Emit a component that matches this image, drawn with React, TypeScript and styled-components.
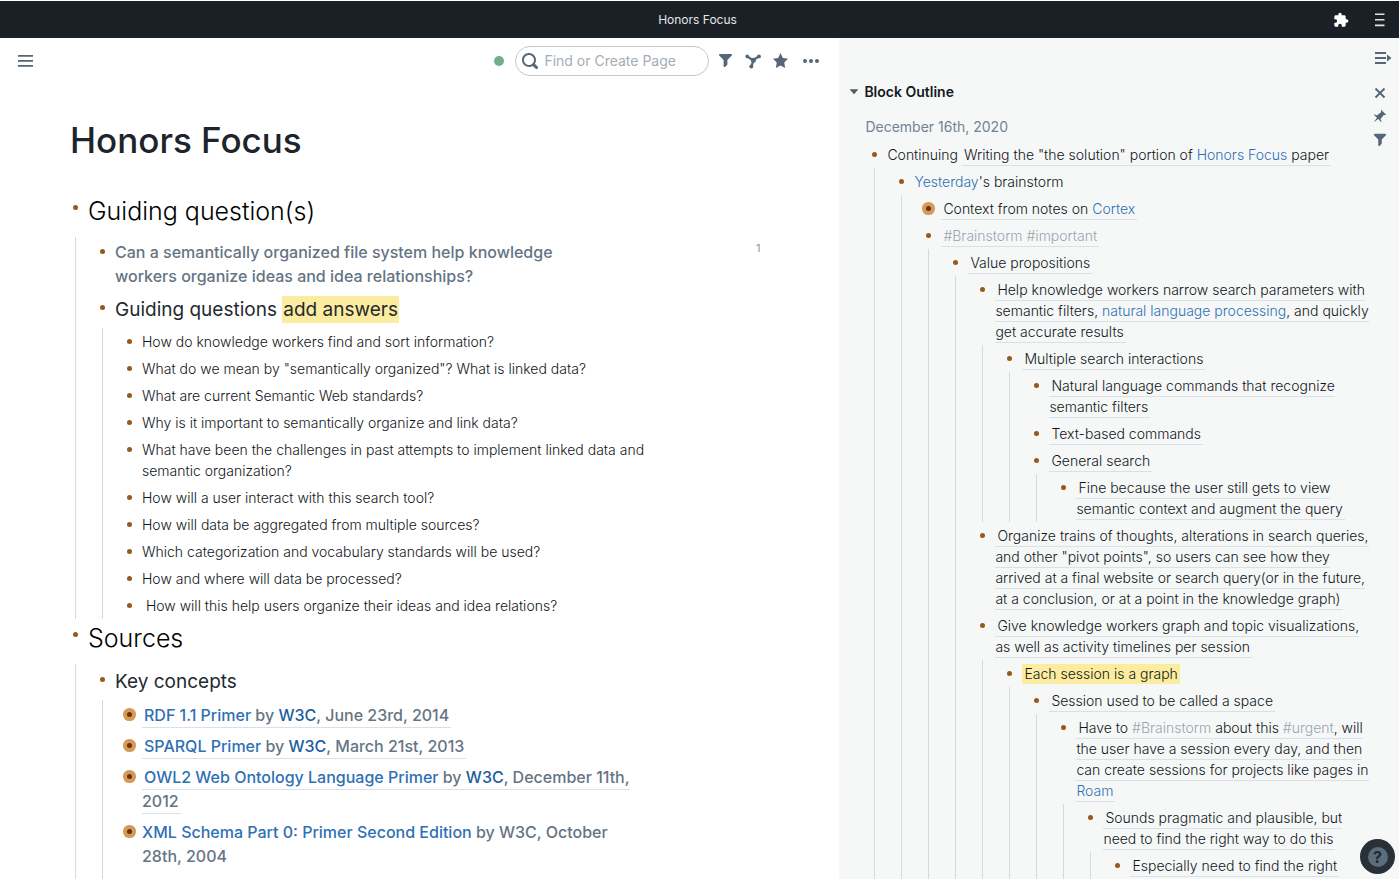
import React from "react";
import styled, { createGlobalStyle, css } from "styled-components";

const GlobalStyle = createGlobalStyle`
  * { box-sizing: border-box; }
  body { margin: 0; background: #fff; }
  button { font: inherit; color: inherit; background: none; border: 0; padding: 0; cursor: pointer; }
  a { color: inherit; text-decoration: none; }
`;

const App = styled.div`
  height: 100vh;
  padding: 1px 1px 2px 0;
  display: flex;
  flex-direction: column;
  overflow: hidden;
  font-family: Inter, "Liberation Sans", sans-serif;
  font-size: 14px;
  line-height: 21px;
  color: #12161a;
`;

const TitleBar = styled.header`
  flex: none;
  height: 37px;
  display: grid;
  grid-template-columns: 1fr auto 1fr;
  align-items: center;
  padding: 0 14px 0 10px;
  background: #1b2027;
  color: #e4e6e8;
  font-size: 12px;
`;

const WindowTitle = styled.span`
  grid-column: 2;
`;

const WindowActions = styled.div`
  display: flex;
  justify-content: flex-end;
  align-items: center;
  gap: 26px;
`;

const IconButton = styled.button`
  display: flex;
  align-items: center;
  justify-content: center;
`;

const Columns = styled.div`
  flex: 1;
  min-height: 0;
  display: grid;
  grid-template-columns: 3fr 2fr;
`;

const Main = styled.main`
  min-width: 0;
  overflow: hidden;
`;

const Toolbar = styled.div`
  display: flex;
  align-items: center;
  height: 45px;
  padding: 0 20px 0 18px;
  color: #566676;
`;

const ToolbarEnd = styled.div`
  margin-left: auto;
  display: flex;
  align-items: center;
`;

const ToolIcons = styled.div`
  display: flex;
  align-items: center;
  gap: 12px;
  margin: 0 15px 0 9px;
`;

const SyncDot = styled.span`
  width: 10px;
  height: 10px;
  border-radius: 50%;
  background: #74ad8b;
  margin-right: 11px;
`;

const SearchBox = styled.label`
  display: flex;
  align-items: center;
  gap: 6px;
  width: 194px;
  height: 30px;
  padding: 0 6px;
  border: 1px solid #c4c7ca;
  border-radius: 15px;
`;

const SearchInput = styled.input`
  flex: 1;
  min-width: 0;
  border: 0;
  padding: 0;
  outline: 0;
  background: none;
  font: inherit;
  color: #2a3037;
  &::placeholder { color: #a3adb6; opacity: 1; }
`;

const Page = styled.article`
  padding: 31px 79px 0 73px;
`;

const PageTitle = styled.h1`
  margin: 0 0 26px -3px;
  font-size: 35px;
  line-height: 52px;
  font-weight: 500;
  color: #1c242c;
`;

type Level = "h1" | "h2" | "h3" | "body";

const levels = {
  h1: css`
    font-size: 25px;
    line-height: 38px;
    padding-bottom: 7px;
    font-weight: 300;
    color: #000;
  `,
  h2: css`
    font-size: 19px;
    line-height: 35px;
    padding-bottom: 1px;
    font-weight: 400;
    color: #24292f;
  `,
  h3: css`
    font-size: 16px;
    line-height: 24px;
    padding: 3px 0 4px;
    font-weight: 500;
    color: #657483;
  `,
  body: css`
    padding: 3px 0;
    font-weight: 300;
  `,
};

const bulletTop = { h1: 13, h2: 13, h3: 9, body: 8 };

const List = styled.ul`
  list-style: none;
  margin: 0;
  padding: 0;
`;

const Children = styled(List)`
  margin-left: 2px;
  padding-left: 24px;
  border-left: 1px solid #d3dae2;
`;

const Row = styled.div<{ $level: Level }>`
  display: flex;
  align-items: flex-start;
  gap: 10px;
  ${(p) => levels[p.$level]}
`;

const Bullet = styled.span<{ $level: Level; $closed?: boolean }>`
  flex: none;
  width: 5px;
  height: 5px;
  margin-top: ${(p) => bulletTop[p.$level]}px;
  border-radius: 50%;
  background: ${(p) => (p.$closed ? "#6d2f0a" : "#97591c")};
  box-shadow: ${(p) => (p.$closed ? "0 0 0 4px #d59a57" : "none")};
`;

const Text = styled.div<{ $narrow?: boolean }>`
  min-width: 0;
  max-width: ${(p) => (p.$narrow ? "480px" : "none")};
`;

const MainList = styled(List)`
  ${Text} { margin-right: 112px; }
  > li:last-child ${Children} { padding-bottom: 20px; }
`;

const Count = styled.span`
  margin-left: auto;
  font-size: 11px;
  line-height: 16px;
  font-weight: 400;
  color: #8b959e;
`;

const Ref = styled.span`
  padding: 0 2px 2px;
  border-bottom: 1px solid #d9e0e6;
`;

const Link = styled.a`
  color: #2f70b5;
`;

const StrongLink = styled.a`
  color: #205d9e;
`;

const Tag = styled.a`
  color: #9aa4ae;
`;

const Highlight = styled.mark<{ $tall?: boolean }>`
  color: inherit;
  background: #fcec9f;
  padding: ${(p) => (p.$tall ? "2px 1px" : "1px 2px 2px")};
`;

const Sidebar = styled.aside`
  min-width: 0;
  overflow: hidden;
  display: flex;
  flex-direction: column;
  background: #f6f8f8;
`;

const SidebarTop = styled.div`
  flex: none;
  height: 40px;
  display: flex;
  align-items: center;
  justify-content: flex-end;
  padding-right: 7px;
  color: #566676;
`;

const SidebarBody = styled.div`
  display: flex;
  gap: 2px;
  padding-right: 12px;
`;

const Outline = styled.section`
  flex: 1;
  min-width: 0;
`;

const OutlineHeader = styled.h2`
  display: flex;
  align-items: center;
  gap: 5px;
  height: 26px;
  margin: 0 0 9px;
  padding-left: 10px;
  font-size: 14px;
  font-weight: 600;
  color: #15191d;

  svg { color: #565b60; }
`;

const Breadcrumb = styled.a`
  display: block;
  padding-left: 26px;
  line-height: 28px;
  color: #748291;
`;

const OutlineList = styled(List)`
  padding-left: 33px;
`;

const PanelTools = styled.div`
  flex: none;
  width: 14px;
  display: flex;
  flex-direction: column;
  align-items: center;
  gap: 10px;
  padding-top: 9px;
  color: #566676;
`;

const HelpButton = styled.button`
  position: fixed;
  right: 5px;
  bottom: 7px;
  width: 35px;
  height: 35px;
  border-radius: 50%;
  background: #2a3038;
  display: flex;
  align-items: center;
  justify-content: center;
`;

const HelpMark = styled.span`
  width: 20px;
  height: 20px;
  border-radius: 50%;
  background: #5c6d7d;
  color: #22282f;
  font-size: 16px;
  line-height: 20px;
  font-weight: 700;
`;

const paths = {
  filter:
    "M13.99.99h-12a1.003 1.003 0 00-.71 1.71l4.71 4.71V14a1.003 1.003 0 001.71.71l2-2c.18-.18.29-.43.29-.71V7.41L14.7 2.7a1.003 1.003 0 00-.71-1.71z",
  star: "M16 6.11l-5.53-.84L8 0 5.53 5.27 0 6.11l4 4.1L3.06 16 8 13.27 12.94 16 12 10.21l4-4.1z",
  search:
    "M15.55 13.43l-2.67-2.68a6.94 6.94 0 001.11-3.76c0-3.87-3.13-7-7-7s-7 3.13-7 7 3.13 7 7 7c1.39 0 2.68-.42 3.76-1.11l2.68 2.67a1.498 1.498 0 102.12-2.12zm-8.56-1.44c-2.76 0-5-2.24-5-5s2.24-5 5-5 5 2.24 5 5-2.24 5-5 5z",
  pin: "M9.41.92c-.51.51-.41 1.5.15 2.56L4.34 7.54C2.8 6.48 1.45 6.05.92 6.58l3.54 3.54-3.54 4.95 4.95-3.54 3.54 3.54c.53-.53.1-1.88-.96-3.42l4.06-5.22c1.06.56 2.04.66 2.55.15L9.41.92z",
  more: "M2 6a2 2 0 100 4 2 2 0 000-4zM8 6a2 2 0 100 4 2 2 0 000-4zM14 6a2 2 0 100 4 2 2 0 000-4z",
  menu: "M0 2h15v1.7H0zM0 7h15v1.7H0zM0 12h15v1.7H0z",
  caret: "M1 5h14L8 13z",
};

const Icon = ({ name, size = 16 }: { name: keyof typeof paths; size?: number }) => (
  <svg width={size} height={size} viewBox="0 0 16 16" fill="currentColor" aria-hidden="true">
    <path d={paths[name]} />
  </svg>
);

const PuzzleIcon = () => (
  <svg width="16" height="16" viewBox="0 0 24 24" fill="#fff" aria-hidden="true">
    <path d="M20.5 11H19V7c0-1.1-.9-2-2-2h-4V3.5C13 2.12 11.88 1 10.5 1S8 2.12 8 3.5V5H4c-1.1 0-1.99.9-1.99 2v3.8H3.5c1.49 0 2.7 1.21 2.7 2.7s-1.21 2.7-2.7 2.7H2V20c0 1.1.9 2 2 2h3.8v-1.5c0-1.49 1.21-2.7 2.7-2.7 1.49 0 2.7 1.21 2.7 2.7V22H17c1.1 0 2-.9 2-2v-4h1.5c1.38 0 2.5-1.12 2.5-2.5S21.88 11 20.5 11z" />
  </svg>
);

const BarsIcon = () => (
  <svg width="10" height="14" viewBox="0 0 10 14" stroke="#dfe1e3" strokeWidth="1.6" aria-hidden="true">
    <path d="M0 1.2h9.5M0 6.8h9.5M0 12.4h9.5" />
  </svg>
);

const GraphIcon = () => (
  <svg width="16" height="16" viewBox="0 0 16 16" fill="currentColor" stroke="currentColor" aria-hidden="true">
    <path d="M2.2 3.6L8 7.2l5.8-3.6M8.5 7.2L6.5 13.4" fill="none" strokeWidth="2.3" />
    <circle cx="2.2" cy="3.4" r="1.8" stroke="none" />
    <circle cx="14" cy="3.4" r="1.9" stroke="none" />
    <circle cx="8.4" cy="7.2" r="2.5" stroke="none" />
    <circle cx="6.3" cy="13.6" r="2" stroke="none" />
  </svg>
);

const CollapseIcon = () => (
  <svg width="17" height="14" viewBox="0 0 17 14" aria-hidden="true">
    <path d="M0 2h11M0 7h11M0 12h11" stroke="currentColor" strokeWidth="1.8" />
    <path d="M12 3.4L16.5 7 12 10.600z" fill="currentColor" />
  </svg>
);

const CrossIcon = () => (
  <svg width="12" height="12" viewBox="0 0 12 12" aria-hidden="true">
    <path d="M1.5 1.5l9 9M10.5 1.5l-9 9" stroke="currentColor" strokeWidth="1.9" />
  </svg>
);

interface BlockProps {
  text: React.ReactNode;
  level?: Level;
  closed?: boolean;
  count?: number;
  children?: React.ReactNode;
}

const Block = ({ text, level = "body", closed, count, children }: BlockProps) => (
  <li>
    <Row $level={level}>
      <Bullet $level={level} $closed={closed} />
      <Text $narrow={count !== undefined}>{text}</Text>
      {count !== undefined && <Count>{count}</Count>}
    </Row>
    {children && <Children>{children}</Children>}
  </li>
);

const questions = [
  "How do knowledge workers find and sort information?",
  'What do we mean by "semantically organized"? What is linked data?',
  "What are current Semantic Web standards?",
  "Why is it important to semantically organize and link data?",
  "What have been the challenges in past attempts to implement linked data and semantic organization?",
  "How will a user interact with this search tool?",
  "How will data be aggregated from multiple sources?",
  "Which categorization and vocabulary standards will be used?",
  "How and where will data be processed?",
  "\u00a0How will this help users organize their ideas and idea relations?",
];

const sources = [
  { title: "RDF 1.1 Primer", date: "June 23rd, 2014" },
  { title: "SPARQL Primer", date: "March 21st, 2013" },
  { title: "OWL2 Web Ontology Language Primer", date: "December 11th, 2012" },
];

export default function HonorsFocus() {
  return (
    <App>
      <GlobalStyle />
      <TitleBar>
        <WindowTitle>Honors Focus</WindowTitle>
        <WindowActions>
          <IconButton aria-label="Extensions"><PuzzleIcon /></IconButton>
          <IconButton aria-label="Window menu"><BarsIcon /></IconButton>
        </WindowActions>
      </TitleBar>
      <Columns>
        <Main>
          <Toolbar>
            <IconButton aria-label="Open menu"><Icon name="menu" /></IconButton>
            <ToolbarEnd>
              <SyncDot />
              <SearchBox>
                <Icon name="search" />
                <SearchInput aria-label="Find or Create Page" placeholder="Find or Create Page" />
              </SearchBox>
              <ToolIcons>
                <IconButton aria-label="Filter"><Icon name="filter" size={15} /></IconButton>
                <IconButton aria-label="Graph view"><GraphIcon /></IconButton>
                <IconButton aria-label="Star page"><Icon name="star" size={15} /></IconButton>
              </ToolIcons>
              <IconButton aria-label="More options"><Icon name="more" /></IconButton>
            </ToolbarEnd>
          </Toolbar>
          <Page>
            <PageTitle>Honors Focus</PageTitle>
            <MainList>
              <Block level="h1" text="Guiding question(s)">
                <Block
                  level="h3"
                  count={1}
                  text="Can a semantically organized file system help knowledge workers organize ideas and idea relationships?"
                />
                <Block level="h2" text={<>Guiding questions <Highlight $tall>add answers</Highlight></>}>
                  {questions.map((q) => <Block key={q} text={q} />)}
                </Block>
              </Block>
              <Block level="h1" text="Sources">
                <Block level="h2" text="Key concepts">
                  {sources.map((s) => (
                    <Block
                      key={s.title}
                      level="h3"
                      closed
                      text={<Ref><Link href="#">{s.title}</Link> by <StrongLink href="#">W3C</StrongLink>, {s.date}</Ref>}
                    />
                  ))}
                  <Block
                    level="h3"
                    closed
                    text={<><Link href="#">XML Schema Part 0: Primer Second Edition</Link> by W3C, October 28th, 2004</>}
                  />
                </Block>
              </Block>
            </MainList>
          </Page>
        </Main>
        <Sidebar>
          <SidebarTop>
            <IconButton aria-label="Close sidebar"><CollapseIcon /></IconButton>
          </SidebarTop>
          <SidebarBody>
            <Outline>
              <OutlineHeader><Icon name="caret" size={10} />Block Outline</OutlineHeader>
              <Breadcrumb href="#">December 16th, 2020</Breadcrumb>
              <OutlineList>
                <Block text={<>Continuing <Ref>Writing the "the solution" portion of <Link href="#">Honors Focus</Link> paper</Ref></>}>
                  <Block text={<><Link href="#">Yesterday</Link>'s brainstorm</>}>
                    <Block closed text={<Ref>Context from notes on <Link href="#">Cortex</Link></Ref>} />
                    <Block text={<Ref><Tag href="#">#Brainstorm</Tag> <Tag href="#">#important</Tag></Ref>}>
                      <Block text={<Ref>Value propositions</Ref>}>
                        <Block
                          text={
                            <Ref>
                              Help knowledge workers narrow search parameters with semantic filters,{" "}
                              <Link href="#">natural language processing</Link>, and quickly get accurate results
                            </Ref>
                          }
                        >
                          <Block text={<Ref>Multiple search interactions</Ref>}>
                            <Block text={<Ref>Natural language commands that recognize semantic filters</Ref>} />
                            <Block text={<Ref>Text-based commands</Ref>} />
                            <Block text={<Ref>General search</Ref>}>
                              <Block text={<Ref>Fine because the user still gets to view semantic context and augment the query</Ref>} />
                            </Block>
                          </Block>
                        </Block>
                        <Block
                          text={
                            <Ref>
                              Organize trains of thoughts, alterations in search queries, and other "pivot points", so
                              users can see how they arrived at a final website or search query(or in the future, at a
                              conclusion, or at a point in the knowledge graph)
                            </Ref>
                          }
                        />
                        <Block text={<Ref>Give knowledge workers graph and topic visualizations, as well as activity timelines per session</Ref>}>
                          <Block text={<Highlight>Each session is a graph</Highlight>}>
                            <Block text={<Ref>Session used to be called a space</Ref>}>
                              <Block
                                text={
                                  <Ref>
                                    Have to <Tag href="#">#Brainstorm</Tag> about this <Tag href="#">#urgent</Tag>, will
                                    the user have a session every day, and then can create sessions for projects like
                                    pages in <Link href="#">Roam</Link>
                                  </Ref>
                                }
                              >
                                <Block text={<Ref>Sounds pragmatic and plausible, but need to find the right way to do this</Ref>}>
                                  <Block text={<Ref>Especially need to find the right</Ref>} />
                                </Block>
                              </Block>
                            </Block>
                          </Block>
                        </Block>
                      </Block>
                    </Block>
                  </Block>
                </Block>
              </OutlineList>
            </Outline>
            <PanelTools>
              <IconButton aria-label="Close panel"><CrossIcon /></IconButton>
              <IconButton aria-label="Pin panel"><Icon name="pin" size={14} /></IconButton>
              <IconButton aria-label="Filter panel"><Icon name="filter" size={14} /></IconButton>
            </PanelTools>
          </SidebarBody>
        </Sidebar>
      </Columns>
      <HelpButton aria-label="Help"><HelpMark>?</HelpMark></HelpButton>
    </App>
  );
}
